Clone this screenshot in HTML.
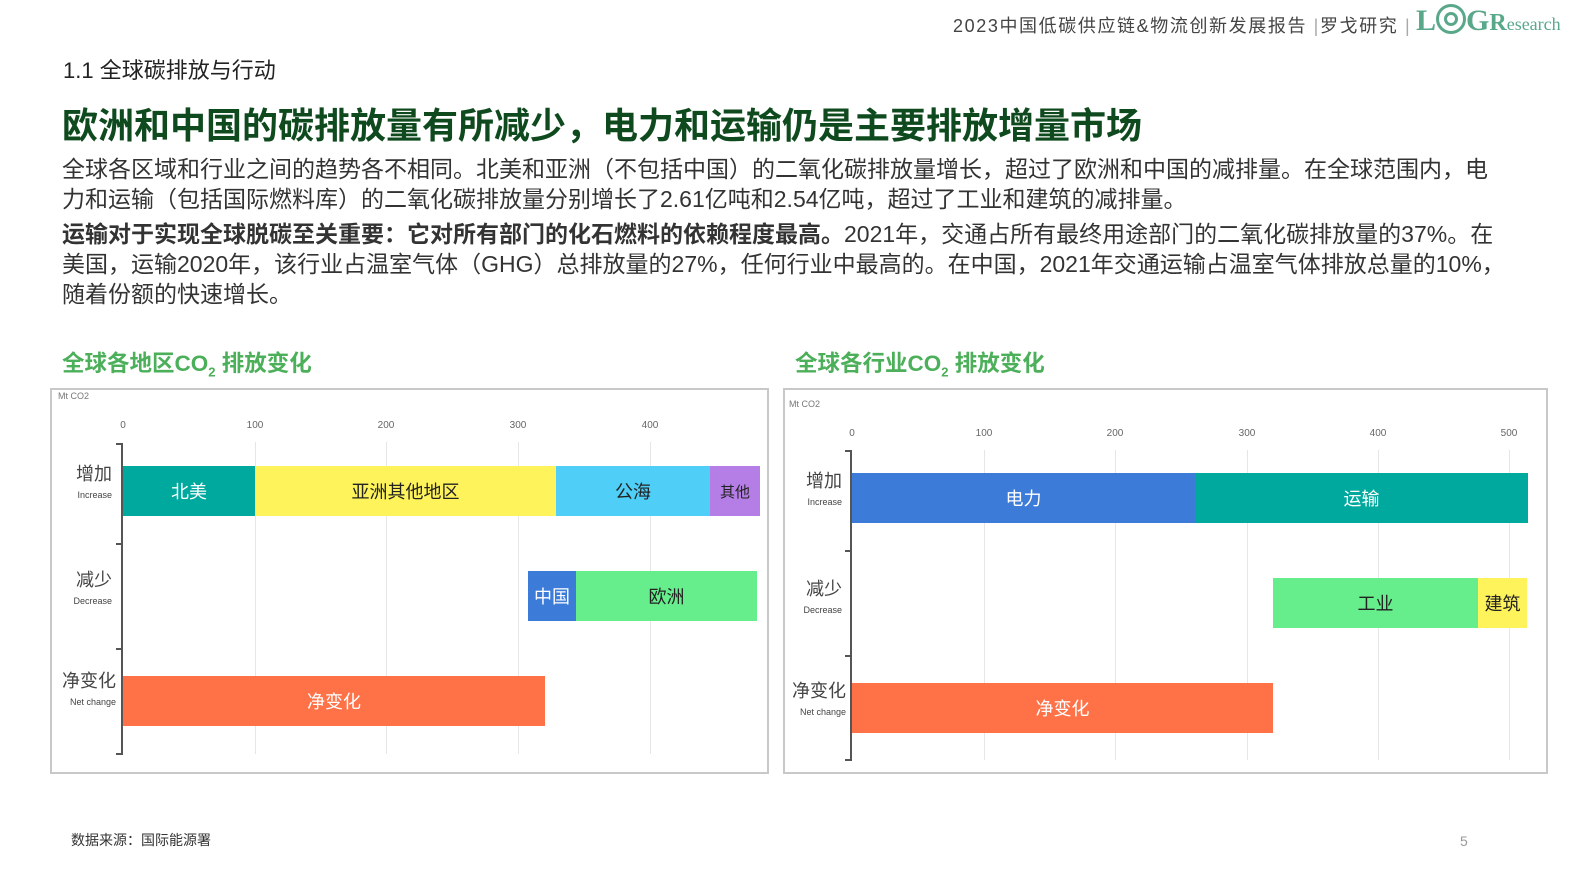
<!DOCTYPE html>
<html><head><meta charset="utf-8"><style>
*{margin:0;padding:0;box-sizing:border-box}
body{width:1587px;height:892px;background:#fff;position:relative;overflow:hidden;font-family:"Liberation Sans","Noto Sans CJK SC",sans-serif;color:#333}
.a{position:absolute;white-space:nowrap}
.bar{position:absolute;display:flex;align-items:center;justify-content:center;font-size:18px;height:50px}
.grid{position:absolute;width:1px;background:#e6e6e6}
.tk{position:absolute;font-size:10px;color:#666;transform:translateX(-50%)}
.lab{position:absolute;text-align:right;color:#444}
.lab b{display:block;font-weight:normal;font-size:18px}
.lab i{display:block;font-style:normal;font-size:9px;margin-top:4px}
.box{position:absolute;border:2px solid #c8c8c8}
</style></head><body>
<div class="a" style="left:953px;top:12px;font-size:18px;color:#444;letter-spacing:1.6px">2023中国低碳供应链&amp;物流创新发展报告 <span style="color:#aaa">|</span>罗戈研究 <span style="color:#aaa">|</span></div>
<div class="a" style="left:1416px;top:4px;font-size:30px;font-weight:bold;color:#5aa88a;font-family:'Liberation Serif',serif">L<span style="display:inline-block;width:30px;height:30px;border:3px solid #5aa88a;border-radius:50%;vertical-align:-4px;position:relative"><span style="position:absolute;left:5px;top:5px;width:14px;height:14px;border:3px solid #5aa88a;border-radius:50%"></span></span>G<span style="font-size:24px">R</span><span style="font-size:18px;font-weight:normal">esearch</span></div>
<div class="a" style="left:63px;top:53px;font-size:22px;color:#222">1.1 全球碳排放与行动</div>
<div class="a" style="left:62px;top:97px;font-size:36px;font-weight:bold;color:#0f4a1f">欧洲和中国的碳排放量有所减少，电力和运输仍是主要排放增量市场</div>
<div class="a" style="left:62px;top:154px;font-size:23px;line-height:30px;color:#333">全球各区域和行业之间的趋势各不相同。北美和亚洲（不包括中国）的二氧化碳排放量增长，超过了欧洲和中国的减排量。在全球范围内，电<br>力和运输（包括国际燃料库）的二氧化碳排放量分别增长了2.61亿吨和2.54亿吨，超过了工业和建筑的减排量。</div>
<div class="a" style="left:62px;top:219px;font-size:23px;line-height:30px;color:#333"><b>运输对于实现全球脱碳至关重要：它对所有部门的化石燃料的依赖程度最高。</b>2021年，交通占所有最终用途部门的二氧化碳排放量的37%。在<br>美国，运输2020年，该行业占温室气体（GHG）总排放量的27%，任何行业中最高的。在中国，2021年交通运输占温室气体排放总量的10%，<br>随着份额的快速增长。</div>
<div class="a" style="left:62px;top:346px;font-size:22.5px;font-weight:bold;color:#4caf5a">全球各地区CO<sub style="font-size:13px">2</sub> 排放变化</div>
<div class="a" style="left:795px;top:346px;font-size:22.5px;font-weight:bold;color:#4caf5a">全球各行业CO<sub style="font-size:13px">2</sub> 排放变化</div>

<!-- left chart -->
<div class="box" style="left:50px;top:388px;width:719px;height:386px"></div>
<div class="a" style="left:58px;top:391px;font-size:9px;color:#777">Mt CO2</div>
<div class="grid" style="left:255px;top:442px;height:312px"></div>
<div class="grid" style="left:386px;top:442px;height:312px"></div>
<div class="grid" style="left:518px;top:442px;height:312px"></div>
<div class="grid" style="left:650px;top:442px;height:312px"></div>
<div class="tk" style="left:123px;top:420px">0</div><div class="tk" style="left:255px;top:420px">100</div><div class="tk" style="left:386px;top:420px">200</div><div class="tk" style="left:518px;top:420px">300</div><div class="tk" style="left:650px;top:420px">400</div>
<div style="position:absolute;left:121px;top:443px;width:2px;height:312px;background:#555"></div>
<div style="position:absolute;left:116px;top:443px;width:6px;height:2px;background:#555"></div>
<div style="position:absolute;left:116px;top:543px;width:6px;height:2px;background:#555"></div>
<div style="position:absolute;left:116px;top:648px;width:6px;height:2px;background:#555"></div>
<div style="position:absolute;left:116px;top:753px;width:6px;height:2px;background:#555"></div>
<div class="lab" style="left:50px;width:62px;top:460px"><b>增加</b><i>Increase</i></div>
<div class="lab" style="left:50px;width:62px;top:566px"><b>减少</b><i>Decrease</i></div>
<div class="lab" style="left:50px;width:66px;top:667px"><b>净变化</b><i>Net change</i></div>
<div class="bar" style="left:123px;top:466px;width:132px;background:#00a99d;color:#fff">北美</div>
<div class="bar" style="left:255px;top:466px;width:301px;background:#fff35c;color:#222">亚洲其他地区</div>
<div class="bar" style="left:556px;top:466px;width:154px;background:#4fcff7;color:#222">公海</div>
<div class="bar" style="left:710px;top:466px;width:50px;background:#b57ee6;color:#222;font-size:15px">其他</div>
<div class="bar" style="left:528px;top:571px;width:48px;background:#3d7bd8;color:#fff">中国</div>
<div class="bar" style="left:576px;top:571px;width:181px;background:#66ee8c;color:#222">欧洲</div>
<div class="bar" style="left:123px;top:676px;width:422px;background:#ff7248;color:#fff">净变化</div>

<!-- right chart -->
<div class="box" style="left:783px;top:388px;width:765px;height:386px"></div>
<div class="a" style="left:789px;top:399px;font-size:9px;color:#777">Mt CO2</div>
<div class="grid" style="left:984px;top:450px;height:310px"></div>
<div class="grid" style="left:1115px;top:450px;height:310px"></div>
<div class="grid" style="left:1247px;top:450px;height:310px"></div>
<div class="grid" style="left:1378px;top:450px;height:310px"></div>
<div class="grid" style="left:1509px;top:450px;height:310px"></div>
<div class="tk" style="left:852px;top:428px">0</div><div class="tk" style="left:984px;top:428px">100</div><div class="tk" style="left:1115px;top:428px">200</div><div class="tk" style="left:1247px;top:428px">300</div><div class="tk" style="left:1378px;top:428px">400</div><div class="tk" style="left:1509px;top:428px">500</div>
<div style="position:absolute;left:850px;top:450px;width:2px;height:311px;background:#555"></div>
<div style="position:absolute;left:845px;top:450px;width:6px;height:2px;background:#555"></div>
<div style="position:absolute;left:845px;top:550px;width:6px;height:2px;background:#555"></div>
<div style="position:absolute;left:845px;top:655px;width:6px;height:2px;background:#555"></div>
<div style="position:absolute;left:845px;top:759px;width:6px;height:2px;background:#555"></div>
<div class="lab" style="left:780px;width:62px;top:467px"><b>增加</b><i>Increase</i></div>
<div class="lab" style="left:780px;width:62px;top:575px"><b>减少</b><i>Decrease</i></div>
<div class="lab" style="left:780px;width:66px;top:677px"><b>净变化</b><i>Net change</i></div>
<div class="bar" style="left:852px;top:473px;width:343px;background:#3d7bd8;color:#fff">电力</div>
<div class="bar" style="left:1195px;top:473px;width:333px;background:#00a99d;color:#fff">运输</div>
<div class="bar" style="left:1273px;top:578px;width:205px;background:#66ee8c;color:#222">工业</div>
<div class="bar" style="left:1478px;top:578px;width:49px;background:#fff35c;color:#222">建筑</div>
<div class="bar" style="left:852px;top:683px;width:421px;background:#ff7248;color:#fff">净变化</div>

<div class="a" style="left:71px;top:830px;font-size:14px;color:#333">数据来源：国际能源署</div>
<div class="a" style="left:1460px;top:833px;font-size:14px;color:#999">5</div>
</body></html>
